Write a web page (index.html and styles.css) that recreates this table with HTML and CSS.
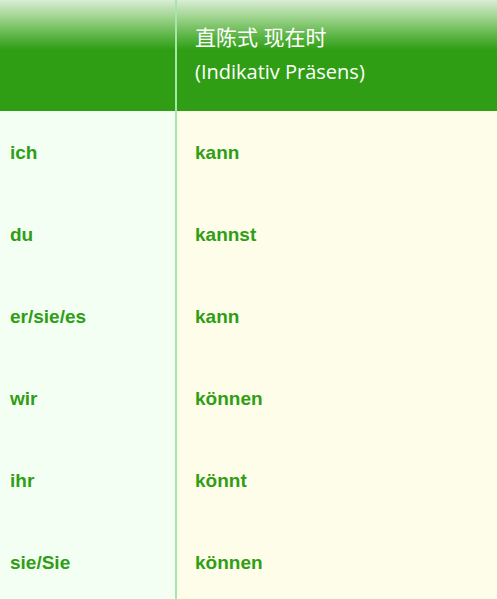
FILE: index.html
```html
<!DOCTYPE html>
<html lang="de">
<head>
<meta charset="utf-8">
<link rel="stylesheet" href="styles.css">
</head>
<body>
<div class="table">
  <div class="head-cell head-left"></div>
  <div class="head-cell head-right">
    <div class="head-zh">直陈式 现在时</div>
    <div class="head-de">(Indikativ Präsens)</div>
  </div>
  <div class="cell left">ich</div><div class="cell right">kann</div>
  <div class="cell left">du</div><div class="cell right">kannst</div>
  <div class="cell left">er/sie/es</div><div class="cell right">kann</div>
  <div class="cell left">wir</div><div class="cell right">können</div>
  <div class="cell left">ihr</div><div class="cell right">könnt</div>
  <div class="cell left">sie/Sie</div><div class="cell right">können</div>
</div>
</body>
</html>
```
FILE: styles.css
```css
html, body {
  margin: 0;
  padding: 0;
  background: #fefdea;
}
*, *::before, *::after {
  box-sizing: border-box;
}
.table {
  display: grid;
  grid-template-columns: 177px 1fr;
  width: 497px;
}
.head-cell {
  height: 111px;
  background: linear-gradient(to bottom, #d9edd6 0px, #a3d693 16px, #62b84c 34px, #2f9e15 50px, #2f9e15 100%);
}
.head-left {
  border-right: 2px solid #a6e6a6;
}
.head-right {
  padding: 20px 0 0 18px;
  color: #ffffff;
  font-family: "Open Sans", "Noto Sans CJK SC", sans-serif;
  font-size: 20px;
  line-height: 34px;
}
.head-zh {
  font-size: 21px;
}
.head-de {
  margin-top: 1px;
}
.cell {
  height: 82px;
  display: flex;
  align-items: center;
  padding-top: 1px;
  font-family: "Liberation Sans", Arial, sans-serif;
  font-weight: bold;
  font-size: 19px;
  color: #2f9e15;
}
.left {
  background: #f4fff4;
  border-right: 2px solid #a6e6a6;
  padding-left: 10px;
}
.right {
  background: #fefdea;
  padding-left: 18px;
}
```
